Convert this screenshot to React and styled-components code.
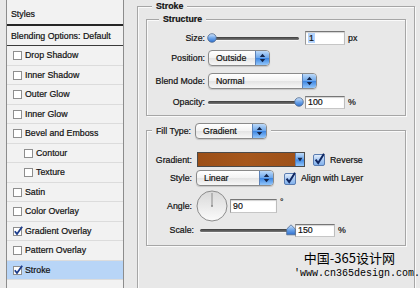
import React from 'react';
import styled, { createGlobalStyle } from 'styled-components';

const GlobalStyle = createGlobalStyle`
  html, body { margin: 0; padding: 0; background: #e8e8e8; }
  body {
    font-family: "Liberation Sans", Arial, sans-serif;
    font-size: 8.8px;
    color: #111;
    -webkit-text-stroke: 0.2px #111;
  }
`;

const Page = styled.div`
  position: relative;
  width: 420px;
  height: 288px;
  overflow: hidden;
  display: flex;
  align-items: flex-start;
  padding-left: 6px;
  box-sizing: border-box;
  background: #e8e8e8;
`;

// ---------- left list ----------
const StylesPanel = styled.div`
  flex-shrink: 0;
  width: 118px;
  height: 288px;
  box-sizing: border-box;
  border-left: 1px solid #8c8c8c;
  border-right: 1px solid #8c8c8c;
  background: #f2f2f2;
`;

const PanelHeader = styled.div`
  height: 26px;
  box-sizing: border-box;
  display: flex;
  align-items: center;
  padding: 4px 0 0 4px;
  border-bottom: 2px solid #262626;
`;

const BlendRow = styled.div`
  height: 20px;
  box-sizing: border-box;
  display: flex;
  align-items: center;
  padding-left: 4px;
  border-bottom: 1px solid #3a3a3a;
`;

const StyleRow = styled.div`
  height: 19.5px;
  box-sizing: border-box;
  display: flex;
  align-items: center;
  gap: 2px;
  padding-left: ${p => (p.$indent ? 17 : 6)}px;
  border-bottom: 1px solid #dcdcdc;
  background: ${p => (p.$selected ? '#b8d5f7' : 'transparent')};
`;

const SmallBox = ({ checked }) => (
  <svg width="10" height="10" viewBox="0 0 10 10" style={{ flexShrink: 0 }}>
    <rect x="0.5" y="1.5" width="8" height="8" fill="#fff" stroke="#8e8e8e" />
    {checked && (
      <path d="M1.8 5.2 L4 8 L9.2 0.8" fill="none" stroke="#1d3d8c" strokeWidth="1.8" />
    )}
  </svg>
);

// ---------- right side ----------
const Main = styled.div`
  margin-left: 13px;
  margin-top: 6px;
`;

const GroupBox = styled.div`
  position: relative;
  box-sizing: border-box;
  width: ${p => p.$w}px;
  height: ${p => p.$h}px;
  margin-top: ${p => p.$mt || 0}px;
  padding: ${p => p.$pad};
  border: 1px solid #a6a6a6;
  box-shadow: inset 1px 1px 0 #fafafa, 1px 1px 0 #fafafa;
`;

const Legend = styled.div`
  position: absolute;
  top: ${p => p.$top}px;
  left: ${p => p.$left}px;
  height: ${p => p.$h}px;
  display: flex;
  align-items: center;
  gap: ${p => p.$gap || 0}px;
  padding: 0 4px;
  background: #e8e8e8;
  font-weight: ${p => (p.$bold ? 'bold' : 'normal')};
`;

const Field = styled.div`
  display: flex;
  align-items: center;
  height: ${p => p.$h}px;
  margin-top: ${p => p.$mt || 0}px;
`;

const Label = styled.div`
  flex-shrink: 0;
  width: ${p => p.$w}px;
  margin-right: ${p => p.$gap}px;
  text-align: right;
`;

const SliderWrap = styled.div`
  position: relative;
  width: ${p => p.$w}px;
  height: 12px;
  margin-left: ${p => p.$ml || 0}px;
  display: flex;
  align-items: center;
`;

const Track = styled.div`
  width: 100%;
  height: 3px;
  border-radius: 2px;
  background: linear-gradient(#3c3c3c, #7a7a7a);
  box-shadow: 0 1px 0 #f6f6f6;
`;

const Thumb = styled.svg`
  position: absolute;
  top: 0;
  left: ${p => p.$pos}px;
`;

const Slider = ({ w, pos, ml, pointed }) => (
  <SliderWrap $w={w} $ml={ml}>
    <Track />
    <Thumb $pos={pos} width="10" height="12" viewBox="0 0 10 12">
      <defs>
        <linearGradient id="thumbg" x1="0" y1="0" x2="0" y2="1">
          <stop offset="0" stopColor="#d4e6fb" />
          <stop offset="0.5" stopColor="#6fa6ea" />
          <stop offset="1" stopColor="#2d6fcf" />
        </linearGradient>
      </defs>
      {pointed ? (
        <path d="M5 0.8 L9.3 5 L9.3 10.8 L0.7 10.8 L0.7 5 Z" fill="url(#thumbg)" stroke="#51698e" strokeWidth="0.8" />
      ) : (
        <circle cx="5" cy="6" r="4.3" fill="url(#thumbg)" stroke="#51698e" strokeWidth="0.8" />
      )}
    </Thumb>
  </SliderWrap>
);

const NumInput = styled.div`
  box-sizing: border-box;
  width: ${p => p.$w}px;
  height: ${p => p.$h}px;
  margin-left: ${p => p.$ml || 0}px;
  display: flex;
  align-items: center;
  padding-left: 2px;
  background: #fff;
  border: 1px solid;
  border-color: #767676 #bdbdbd #c6c6c6 #9a9a9a;
  box-shadow: inset 0 1px 1px rgba(0, 0, 0, 0.18);
`;

const Highlight = styled.span`
  background: #b5d4fb;
  padding: 0 1px;
`;

const Unit = styled.span`
  margin-left: 3px;
  align-self: ${p => (p.$sup ? 'flex-start' : 'center')};
  margin-top: ${p => (p.$sup ? 7 : 0)}px;
`;

const SelectBox = styled.div`
  box-sizing: border-box;
  width: ${p => p.$w}px;
  height: 16px;
  display: flex;
  align-items: center;
  padding-left: 7px;
  overflow: hidden;
  border: 1px solid #8a8a8a;
  border-radius: 4px;
  background: linear-gradient(#ffffff, #f3f3f3 48%, #e4e4e4 52%, #f7f7f7);
  box-shadow: 0 1px 1px rgba(0, 0, 0, 0.15);
`;

const SelectText = styled.span`
  flex: 1;
`;

const BlueCap = styled.div`
  flex-shrink: 0;
  width: ${p => p.$w || 13}px;
  height: 100%;
  display: flex;
  align-items: center;
  justify-content: center;
  border-left: 1px solid #5c82b8;
  background: linear-gradient(#bcd9f8, #6ea8ec 48%, #3d86e2 52%, #93c6fa);
`;

const UpDown = () => (
  <svg width="7" height="10" viewBox="0 0 7 10">
    <path d="M3.5 0.8 L6.2 4 L0.8 4 Z" fill="#14254a" />
    <path d="M0.8 6 L6.2 6 L3.5 9.2 Z" fill="#14254a" />
  </svg>
);

const DownOnly = () => (
  <svg width="6" height="5" viewBox="0 0 6 5">
    <path d="M0.5 0.8 L5.5 0.8 L3 4.4 Z" fill="#14254a" />
  </svg>
);

const Select = ({ w, value }) => (
  <SelectBox $w={w}>
    <SelectText>{value}</SelectText>
    <BlueCap>
      <UpDown />
    </BlueCap>
  </SelectBox>
);

const Swatch = styled.div`
  box-sizing: border-box;
  width: 108px;
  height: 15px;
  display: flex;
  border: 1px solid #4a4a4a;
`;

const SwatchColor = styled.div`
  flex: 1;
  background: linear-gradient(90deg, #9c4f17, #a6571c 50%, #9e5119);
`;

const CheckLabel = styled.div`
  display: flex;
  align-items: center;
  gap: 5px;
  margin-left: ${p => p.$ml}px;
`;

const AquaCheck = () => (
  <svg width="12" height="13" viewBox="0 0 12 13" style={{ flexShrink: 0 }}>
    <defs>
      <linearGradient id="aquag" x1="0" y1="0" x2="0" y2="1">
        <stop offset="0" stopColor="#e6f0fc" />
        <stop offset="0.5" stopColor="#a9c9f2" />
        <stop offset="1" stopColor="#7fb0ec" />
      </linearGradient>
    </defs>
    <rect x="0.5" y="1.5" width="11" height="11" rx="1.5" fill="url(#aquag)" stroke="#5a7cb0" />
    <path d="M2.6 6.6 L5.2 10 L11 0.8" fill="none" stroke="#0f2660" strokeWidth="2" />
  </svg>
);

const Dial = () => (
  <svg width="32" height="32" viewBox="0 0 32 32">
    <defs>
      <linearGradient id="dialg" x1="0" y1="0" x2="0" y2="1">
        <stop offset="0" stopColor="#d8d8d8" />
        <stop offset="1" stopColor="#fbfbfb" />
      </linearGradient>
    </defs>
    <circle cx="16" cy="16" r="15" fill="url(#dialg)" stroke="#8c8c8c" />
    <line x1="16" y1="16" x2="16" y2="3" stroke="#8a8a8a" strokeWidth="1" />
    <circle cx="16" cy="16" r="1" fill="#8a8a8a" />
  </svg>
);

const Watermark = styled.div`
  position: absolute;
  right: 0;
  bottom: 9px;
  display: flex;
  flex-direction: column;
  align-items: flex-end;
  color: #000;
  -webkit-text-stroke: 0;
`;

const WmTitle = styled.div`
  margin-right: 25px;
  font-family: "Noto Sans CJK SC", sans-serif;
  font-size: 13px;
  line-height: 15px;
`;

const WmUrl = styled.div`
  margin-top: 3px;
  font-family: "Liberation Mono", monospace;
  font-size: 10px;
  line-height: 11px;
  white-space: nowrap;
`;

const items = [
  { name: 'Drop Shadow' },
  { name: 'Inner Shadow' },
  { name: 'Outer Glow' },
  { name: 'Inner Glow' },
  { name: 'Bevel and Emboss' },
  { name: 'Contour', indent: true },
  { name: 'Texture', indent: true },
  { name: 'Satin' },
  { name: 'Color Overlay' },
  { name: 'Gradient Overlay', checked: true },
  { name: 'Pattern Overlay' },
  { name: 'Stroke', checked: true, selected: true },
];

export default function App() {
  return (
    <Page>
      <GlobalStyle />
      <StylesPanel>
        <PanelHeader>Styles</PanelHeader>
        <BlendRow>Blending Options: Default</BlendRow>
        {items.map(it => (
          <StyleRow key={it.name} $indent={it.indent} $selected={it.selected}>
            <SmallBox checked={it.checked} />
            {it.name}
          </StyleRow>
        ))}
      </StylesPanel>

      <Main>
        <GroupBox $w={278} $h={300} $pad="12px 8px 0">
          <Legend $top={-7} $left={14} $h={12} $bold>Stroke</Legend>

          <GroupBox $w={260} $h={97} $pad="11px 0 0">
            <Legend $top={-7} $left={12} $h={12} $bold>Structure</Legend>
            <Field $h={14}>
              <Label $w={58} $gap={3}>Size:</Label>
              <Slider w={91} pos={-1} />
              <NumInput $w={40} $h={14} $ml={6}><Highlight>1</Highlight></NumInput>
              <Unit>px</Unit>
            </Field>
            <Field $h={16} $mt={5}>
              <Label $w={58} $gap={3}>Position:</Label>
              <Select w={62} value="Outside" />
            </Field>
            <Field $h={16} $mt={7}>
              <Label $w={58} $gap={3}>Blend Mode:</Label>
              <Select w={109} value="Normal" />
            </Field>
            <Field $h={14} $mt={6}>
              <Label $w={58} $gap={3}>Opacity:</Label>
              <Slider w={91} pos={86} />
              <NumInput $w={40} $h={13} $ml={6}>100</NumInput>
              <Unit>%</Unit>
            </Field>
          </GroupBox>

          <GroupBox $w={260} $h={116} $mt={14} $pad="21px 0 0">
            <Legend $top={-8} $left={5} $h={16} $gap={4}>
              Fill Type:
              <Select w={72} value="Gradient" />
            </Legend>
            <Field $h={15}>
              <Label $w={45} $gap={5}>Gradient:</Label>
              <Swatch>
                <SwatchColor />
                <BlueCap $w={8}>
                  <DownOnly />
                </BlueCap>
              </Swatch>
              <CheckLabel $ml={8}>
                <AquaCheck />
                Reverse
              </CheckLabel>
            </Field>
            <Field $h={16} $mt={3}>
              <Label $w={45} $gap={4}>Style:</Label>
              <Select w={78} value="Linear" />
              <CheckLabel $ml={10}>
                <AquaCheck />
                Align with Layer
              </CheckLabel>
            </Field>
            <Field $h={32} $mt={4}>
              <Label $w={45} $gap={4}>Angle:</Label>
              <Dial />
              <NumInput $w={47} $h={14} $ml={2}>90</NumInput>
              <Unit $sup>°</Unit>
            </Field>
            <Field $h={12} $mt={2}>
              <Label $w={47} $gap={6}>Scale:</Label>
              <Slider w={92} pos={86} pointed />
              <NumInput $w={40} $h={13} $ml={3}>150</NumInput>
              <Unit>%</Unit>
            </Field>
          </GroupBox>
        </GroupBox>
      </Main>

      <Watermark>
        <WmTitle>中国-365设计网</WmTitle>
        <WmUrl>'www.cn365design.com.</WmUrl>
      </Watermark>
    </Page>
  );
}
